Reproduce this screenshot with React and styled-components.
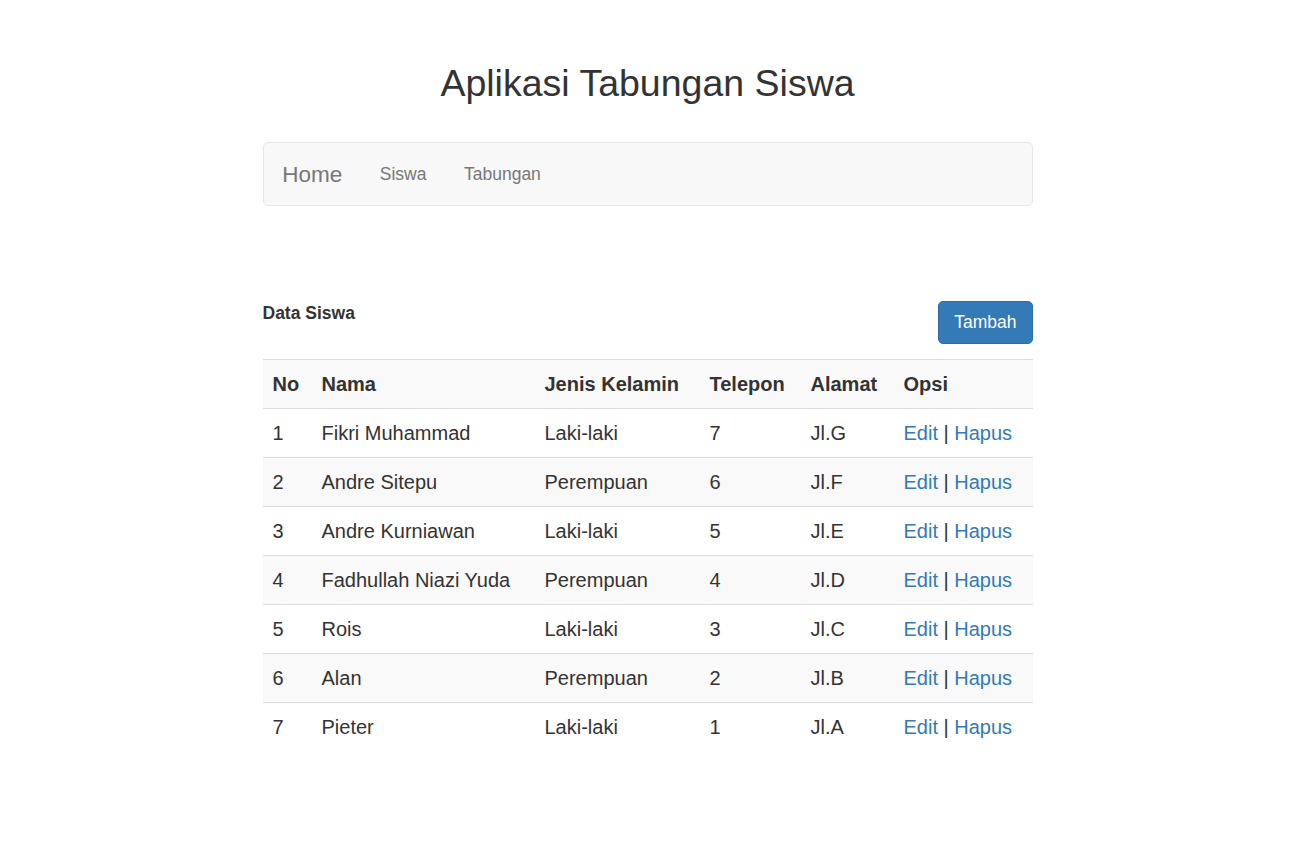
import React from 'react';
import styled, { createGlobalStyle } from 'styled-components';

const GlobalStyle = createGlobalStyle`
    html, body {
        margin: 0;
        padding: 0;
        background: #fff;
    }
    body {
        font-family: "Liberation Sans", Arial, Helvetica, sans-serif;
        color: #333;
        font-size: 17.5px;
        line-height: 1.42857;
    }
`;

const Container = styled.div`
    width: 770px;
    margin: 0 auto;
`;

const Title = styled.h2`
    margin: 63px 0 0;
    font-size: 37.5px;
    font-weight: 400;
    line-height: 1.1;
    text-align: center;
    color: #333;
`;

const Navbar = styled.nav`
    margin-top: 38px;
    display: flex;
    align-items: center;
    height: 62px;
    background: #f8f8f8;
    border: 1px solid #e7e7e7;
    border-radius: 5px;
`;

const Brand = styled.a`
    padding: 18.75px;
    font-size: 22.5px;
    line-height: 25px;
    color: #777;
    text-decoration: none;
`;

const NavLink = styled.a`
    padding: 18.75px;
    font-size: 17.5px;
    line-height: 25px;
    color: #777;
    text-decoration: none;
`;

const PanelHead = styled.div`
    margin-top: 95px;
    margin-bottom: 15px;
    display: flex;
    justify-content: space-between;
    align-items: flex-start;
`;

const Heading = styled.b`
    font-size: 17.5px;
    line-height: 25px;
    font-weight: 700;
`;

const Button = styled.button`
    font-family: inherit;
    font-size: 17.5px;
    line-height: 25px;
    padding: 8px 15px;
    color: #fff;
    background: #337ab7;
    border: 1px solid #2e6da4;
    border-radius: 5px;
    cursor: pointer;
`;

const Table = styled.table`
    width: 100%;
    table-layout: fixed;
    border-collapse: collapse;
    border-spacing: 0;
    font-size: 20px;
`;

const Row = styled.tr`
    background: ${props => (props.striped ? '#f9f9f9' : '#fff')};
`;

const Th = styled.th`
    box-sizing: border-box;
    width: ${props => props.w}px;
    padding: 10px;
    line-height: 28px;
    text-align: left;
    font-weight: 700;
    white-space: nowrap;
    border-top: 1px solid #ddd;
`;

const Td = styled.td`
    padding: 10px;
    line-height: 28px;
    white-space: nowrap;
    border-top: 1px solid #ddd;
`;

const ActionLink = styled.a`
    color: #337ab7;
    text-decoration: none;
`;

const columns = [
    { label: 'No', w: 49 },
    { label: 'Nama', w: 223 },
    { label: 'Jenis Kelamin', w: 165 },
    { label: 'Telepon', w: 101 },
    { label: 'Alamat', w: 93 },
    { label: 'Opsi', w: 139 },
];

const siswa = [
    { nama: 'Fikri Muhammad', jk: 'Laki-laki', telp: '7', alamat: 'Jl.G' },
    { nama: 'Andre Sitepu', jk: 'Perempuan', telp: '6', alamat: 'Jl.F' },
    { nama: 'Andre Kurniawan', jk: 'Laki-laki', telp: '5', alamat: 'Jl.E' },
    { nama: 'Fadhullah Niazi Yuda', jk: 'Perempuan', telp: '4', alamat: 'Jl.D' },
    { nama: 'Rois', jk: 'Laki-laki', telp: '3', alamat: 'Jl.C' },
    { nama: 'Alan', jk: 'Perempuan', telp: '2', alamat: 'Jl.B' },
    { nama: 'Pieter', jk: 'Laki-laki', telp: '1', alamat: 'Jl.A' },
];

const App = () => {
    return (
        <>
            <GlobalStyle />
            <Container>
                <Title>Aplikasi Tabungan Siswa</Title>

                <Navbar>
                    <Brand href="#">Home</Brand>
                    <NavLink href="#">Siswa</NavLink>
                    <NavLink href="#">Tabungan</NavLink>
                </Navbar>

                <PanelHead>
                    <Heading>Data Siswa</Heading>
                    <Button>Tambah</Button>
                </PanelHead>

                <Table>
                    <tbody>
                        <Row striped>
                            {columns.map(col => (
                                <Th key={col.label} w={col.w}>{col.label}</Th>
                            ))}
                        </Row>
                        {siswa.map((s, i) => (
                            <Row key={s.nama} striped={i % 2 === 1}>
                                <Td>{i + 1}</Td>
                                <Td>{s.nama}</Td>
                                <Td>{s.jk}</Td>
                                <Td>{s.telp}</Td>
                                <Td>{s.alamat}</Td>
                                <Td>
                                    <ActionLink href="#">Edit</ActionLink> | <ActionLink href="#">Hapus</ActionLink>
                                </Td>
                            </Row>
                        ))}
                    </tbody>
                </Table>
            </Container>
        </>
    );
};

export default App;
